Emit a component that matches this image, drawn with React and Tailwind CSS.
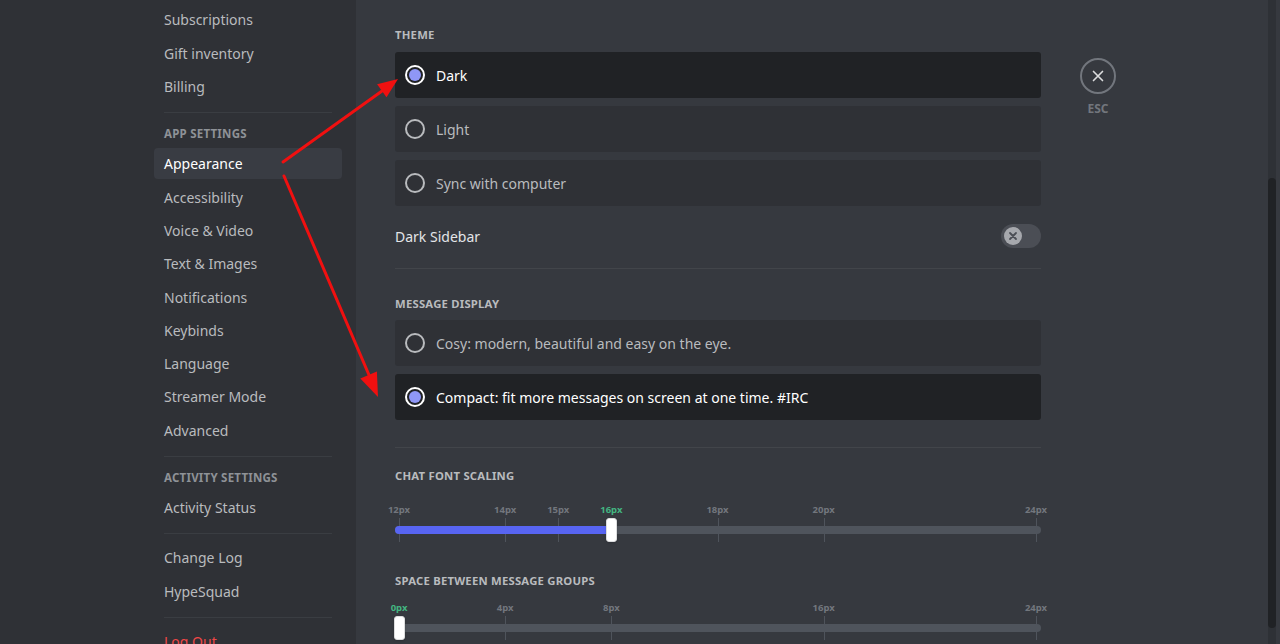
import React from 'react';

const font = { fontFamily: '"Noto Sans", "Open Sans", sans-serif' };

const SideItem = ({ label, active, danger }) => (
  <div
    className={`h-[31.3px] shrink-0 mb-[2px] px-[10px] flex items-center rounded-[4px] text-[14px] ${
      active ? 'bg-[#393c43] text-white' : danger ? 'text-[#f04747]' : 'text-[#b9bbbe]'
    }`}
  >
    {label}
  </div>
);

const SideHeader = ({ label }) => (
  <div className="h-[25px] shrink-0 mb-[2px] px-[10px] flex items-center text-[11.5px] font-bold tracking-[0.02em] text-[#8e9297] uppercase">
    {label}
  </div>
);

const SideDivider = () => <div className="mx-[10px] my-2 h-px shrink-0 bg-[#3a3d42]" />;

const Radio = ({ label, selected }) => (
  <div
    className={`flex items-center h-[46px] shrink-0 px-[10px] rounded-[3px] mb-2 ${
      selected ? 'bg-[#202225]' : 'bg-[#2f3136]'
    }`}
  >
    <div
      className={`w-5 h-5 rounded-full border-2 flex items-center justify-center shrink-0 ${
        selected ? 'border-white' : 'border-[#b9bbbe]'
      }`}
    >
      {selected && <div className="w-3 h-3 rounded-full bg-[#8f97f6]" />}
    </div>
    <span className={`ml-[11px] text-[14px] ${selected ? 'text-white' : 'text-[#b9bbbe]'}`}>{label}</span>
  </div>
);

const SectionLabel = ({ children, className = '' }) => (
  <div className={`h-4 shrink-0 flex items-center text-[11.3px] font-bold tracking-[0.02em] text-[#b9bbbe] uppercase ${className}`}>
    {children}
  </div>
);

// track is 646px wide, markers run from 4px to 641px
const Slider = ({ marks, min, max, value }) => {
  const pos = (v) => 4 + (637 * (v - min)) / (max - min);
  const at = pos(value);
  return (
    <div className="relative h-[38px] w-full">
      {marks.map((m) => (
        <React.Fragment key={m}>
          <div
            className={`absolute top-0 -translate-x-1/2 text-[9.5px] font-bold leading-3 ${
              m === value ? 'text-[#43b581]' : 'text-[#72767d]'
            }`}
            style={{ left: pos(m) }}
          >
            {m}px
          </div>
          <div className="absolute top-[14px] h-6 w-px bg-[#4f545c]" style={{ left: pos(m) }} />
        </React.Fragment>
      ))}
      <div className="absolute left-0 right-0 top-[22px] h-2 rounded-full bg-[#4f545c]" />
      <div className="absolute left-0 top-[22px] h-2 rounded-full bg-[#5865f2]" style={{ width: at }} />
      <div
        className="absolute top-[14px] h-6 w-[11px] rounded-[3px] bg-white border border-[#dcddde] shadow"
        style={{ left: at - 5 }}
      />
    </div>
  );
};

const Arrows = () => (
  <svg className="absolute inset-0 w-full h-full pointer-events-none" viewBox="0 0 1280 644">
    <g stroke="#f01010" strokeWidth="3" strokeLinecap="round" fill="#f01010">
      <line x1="283" y1="162" x2="382" y2="91" />
      <polygon points="398,79 386.5,97.2 377.1,84.2" stroke="none" />
      <line x1="284" y1="176" x2="369" y2="375" />
      <polygon points="378,397 376.9,371.4 360.3,378.4" stroke="none" />
    </g>
  </svg>
);

export default function App() {
  return (
    <div className="relative w-[1280px] h-[644px] overflow-hidden flex bg-[#36393f]" style={font}>
      {/* sidebar */}
      <div className="w-[356px] shrink-0 bg-[#2f3136] flex justify-end">
        <div className="w-[202px] pt-[4.3px] pr-[14px] flex flex-col">
          <SideItem label="Subscriptions" />
          <SideItem label="Gift inventory" />
          <SideItem label="Billing" />
          <SideDivider />
          <SideHeader label="App Settings" />
          <SideItem label="Appearance" active />
          <SideItem label="Accessibility" />
          <SideItem label="Voice & Video" />
          <SideItem label="Text & Images" />
          <SideItem label="Notifications" />
          <SideItem label="Keybinds" />
          <SideItem label="Language" />
          <SideItem label="Streamer Mode" />
          <SideItem label="Advanced" />
          <SideDivider />
          <SideHeader label="Activity Settings" />
          <SideItem label="Activity Status" />
          <SideDivider />
          <SideItem label="Change Log" />
          <SideItem label="HypeSquad" />
          <SideDivider />
          <SideItem label="Log Out" danger />
        </div>
      </div>

      {/* content */}
      <div className="flex-1 flex">
        <div className="w-[646px] ml-[39px] pt-[27px] flex flex-col">
          <SectionLabel className="mb-[9px]">Theme</SectionLabel>
          <Radio label="Dark" selected />
          <Radio label="Light" />
          <Radio label="Sync with computer" />
          <div className="mt-[10px] h-6 shrink-0 flex items-center justify-between">
            <span className="text-[14px] text-[#e3e5e8]">Dark Sidebar</span>
            <div className="w-10 h-6 rounded-full bg-[#4b4e55] flex items-center px-[3px]">
              <div className="w-[18px] h-[18px] rounded-full bg-[#a6a8ad] flex items-center justify-center">
                <svg width="10" height="10" viewBox="0 0 10 10">
                  <path d="M2 2l6 6M8 2L2 8" stroke="#4b4e55" strokeWidth="1.8" strokeLinecap="round" />
                </svg>
              </div>
            </div>
          </div>
          <div className="mt-5 h-px shrink-0 bg-[#42454a]" />
          <SectionLabel className="mt-[27px] mb-2">Message Display</SectionLabel>
          <Radio label="Cosy: modern, beautiful and easy on the eye." />
          <Radio label="Compact: fit more messages on screen at one time. #IRC" selected />
          <div className="mt-[19px] h-px shrink-0 bg-[#42454a]" />
          <SectionLabel className="mt-5">Chat Font Scaling</SectionLabel>
          <div className="mt-5 shrink-0">
            <Slider marks={[12, 14, 15, 16, 18, 20, 24]} min={12} max={24} value={16} />
          </div>
          <SectionLabel className="mt-[31px]">Space Between Message Groups</SectionLabel>
          <div className="mt-[13px] shrink-0">
            <Slider marks={[0, 4, 8, 16, 24]} min={0} max={24} value={0} />
          </div>
        </div>

        {/* close */}
        <div className="ml-[39px] pt-[58px] flex flex-col items-center w-9">
          <div className="w-9 h-9 rounded-full border-2 border-[#72767d] flex items-center justify-center">
            <svg width="18" height="18" viewBox="0 0 24 24">
              <path d="M6 6l12 12M18 6L6 18" stroke="#dcddde" strokeWidth="2.2" strokeLinecap="round" />
            </svg>
          </div>
          <div className="mt-[6px] text-[12px] font-bold text-[#72767d]">ESC</div>
        </div>

        <div className="flex-1" />
        {/* scrollbar */}
        <div className="w-3 pr-1 h-full flex">
          <div className="w-2 h-full bg-[#2e3136] flex flex-col">
            <div className="mt-[178px] h-[450px] rounded-full bg-[#202225]" />
          </div>
        </div>
      </div>

      <Arrows />
    </div>
  );
}
